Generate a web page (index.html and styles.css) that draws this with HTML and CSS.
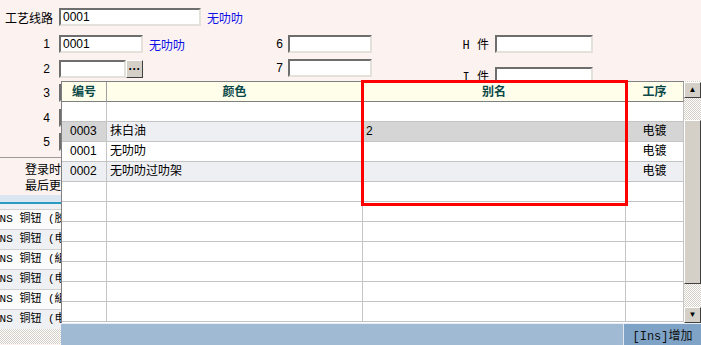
FILE: index.html
```html
<!DOCTYPE html>
<html lang="zh">
<head>
  <meta charset="UTF-8" />
  <title>工艺线路</title>
  <link rel="stylesheet" href="styles.css">
</head>
<body>
  <div class="page">
    <div class="top">
      <span class="top-label">工艺线路</span>
      <input class="field wide" value="0001">
      <span class="link">无叻叻</span>
    </div>

    <div class="fields">
      <div class="col col-a">
        <div class="row"><span class="lbl">1</span><input class="field mid" value="0001"><span class="link">无叻叻</span></div>
        <div class="row"><span class="lbl">2</span><input class="field short"><button class="dots">···</button></div>
        <div class="row"><span class="lbl">3</span><input class="field mid"></div>
        <div class="row"><span class="lbl">4</span><input class="field mid"></div>
        <div class="row"><span class="lbl">5</span><input class="field mid"></div>
      </div>
      <div class="col col-b">
        <div class="row"><span class="lbl">6</span><input class="field mid"></div>
        <div class="row"><span class="lbl">7</span><input class="field mid"></div>
      </div>
      <div class="col col-c">
        <div class="row"><span class="lbl">H 件</span><input class="field big"></div>
        <div class="row"><span class="lbl">I 件</span><input class="field big"></div>
      </div>
    </div>

    <div class="meta">
      <div class="meta-line">登录时</div>
      <div class="meta-line">最后更</div>
    </div>

    <div class="list-head"></div>
    <div class="list">
      <div class="item">ANS 铜钮 (胶</div>
      <div class="item alt">ANS 铜钮 (电</div>
      <div class="item">ANS 铜钮 (組</div>
      <div class="item alt">ANS 铜钮 (电</div>
      <div class="item">ANS 铜钮 (組</div>
      <div class="item alt">ANS 铜钮 (电</div>
    </div>
    <div class="dither"></div>

    <div class="popup">
      <div class="grid-area">
        <div class="grid">
          <div class="hd">编号</div><div class="hd">颜色</div><div class="hd">别名</div><div class="hd">工序</div>

          <div class="c"></div><div class="c"></div><div class="c"></div><div class="c"></div>

          <div class="c sel num">0003</div><div class="c focus">抹白油</div><div class="c sel">2</div><div class="c sel ctr">电镀</div>
          <div class="c num">0001</div><div class="c">无叻叻</div><div class="c"></div><div class="c ctr">电镀</div>
          <div class="c alt num">0002</div><div class="c alt">无叻叻过叻架</div><div class="c alt"></div><div class="c alt ctr">电镀</div>

          <div class="c"></div><div class="c"></div><div class="c"></div><div class="c"></div>
          <div class="c"></div><div class="c"></div><div class="c"></div><div class="c"></div>
          <div class="c"></div><div class="c"></div><div class="c"></div><div class="c"></div>
          <div class="c"></div><div class="c"></div><div class="c"></div><div class="c"></div>
          <div class="c"></div><div class="c"></div><div class="c"></div><div class="c"></div>
          <div class="c"></div><div class="c"></div><div class="c"></div><div class="c"></div>
          <div class="c"></div><div class="c"></div><div class="c"></div><div class="c"></div>
        </div>
        <div class="scroll">
          <div class="sbtn">&#9650;</div>
          <div class="track short-track"></div>
          <div class="thumb"></div>
          <div class="track"></div>
          <div class="sbtn">&#9660;</div>
        </div>
      </div>
      <div class="footer">
        <button class="ins">[Ins]增加</button>
      </div>
    </div>

    <div class="mark"></div>
  </div>
</body>
</html>
```

FILE: styles.css
```css
body {
  margin: 0;
  background: #fcf3f0;
  font-family: "Liberation Sans", "Noto Sans CJK SC", sans-serif;
  font-size: 12px;
  color: #000;
}

.page {
  position: relative;
  width: 701px;
  height: 345px;
  overflow: hidden;
}

.field {
  box-sizing: border-box;
  height: 18px;
  margin: 0;
  padding: 0 2px;
  background: #fff;
  border: 2px solid;
  border-color: #6e6e6e #e4e0da #e4e0da #6e6e6e;
  font: 12px "Liberation Sans", "Noto Sans CJK SC", sans-serif;
  color: #000;
  outline: none;
}

.wide { width: 142px; }
.mid { width: 84px; }
.short { width: 67px; }
.big { width: 98px; }

.link {
  color: #1010e8;
  margin-left: 6px;
}

.top {
  display: flex;
  align-items: center;
  height: 18px;
  padding: 8px 0 0 5px;
}

.top-label {
  width: 54px;
  font-size: 12px;
}

.fields {
  display: flex;
  margin-top: 9px;
}

.col {
  display: flex;
  flex-direction: column;
}

.col-a { width: 273px; gap: 6.5px; }
.col-b { width: 187px; gap: 6px; }
.col-c { gap: 14px; }

.row {
  display: flex;
  align-items: center;
  height: 18px;
}

.lbl {
  text-align: right;
  white-space: nowrap;
}

.col-a .lbl { width: 50px; margin-right: 9px; }
.col-b .lbl { width: 10px; margin-right: 5px; }
.col-c .lbl { width: 29px; margin-right: 6px; font-family: "Liberation Mono", "Noto Sans CJK SC", monospace; }

.dots {
  box-sizing: border-box;
  width: 17px;
  height: 18px;
  padding: 0;
  background: #d4d0c8;
  border: 1px solid;
  border-color: #fff #404040 #404040 #fff;
  font-weight: bold;
  font-size: 12px;
  line-height: 10px;
}

.meta {
  margin-top: 6px;
  border-top: 1px solid #9a9a9a;
  padding-top: 4px;
  line-height: 16px;
  height: 33px;
}

.meta-line {
  margin-left: 25px;
  white-space: nowrap;
}

.list-head {
  height: 7px;
  background: #dae7f3;
  border-bottom: 2px solid #2a9cc2;
}

.list {
  padding-top: 5px;
  background: #eef0f4;
}

.item {
  box-sizing: border-box;
  height: 20px;
  border-top: 1px solid #d0d0d0;
  background: #fbfbfb;
  text-indent: -7px;
  font: 11px "Liberation Mono", "Noto Sans CJK SC", monospace;
  line-height: 19px;
  white-space: nowrap;
}

.item.alt { background: #eef0f4; }

.dither {
  height: 15px;
  background: repeating-conic-gradient(#d4d0c8 0 25%, #fff 0 50%) 0 0 / 2px 2px;
}

/* drop-down grid over the form */
.popup {
  position: absolute;
  left: 61px;
  top: 81px;
  width: 640px;
  height: 264px;
  display: flex;
  flex-direction: column;
  background: #fff;
}

.grid-area {
  display: flex;
  height: 242px;
}

.grid {
  box-sizing: border-box;
  width: 623px;
  border-left: 1px solid #808080;
  border-top: 1px solid #808080;
  display: grid;
  grid-template-columns: 45px 256px 263px 58px;
  grid-auto-rows: 20px;
  align-content: start;
}

.hd {
  box-sizing: border-box;
  background: #fefeea;
  border-right: 1px solid #a0a0a0;
  border-bottom: 1px solid #808080;
  text-align: center;
  font-weight: bold;
  color: #0a4848;
  font-family: "Noto Sans CJK SC", sans-serif;
  line-height: 18px;
}

.c {
  box-sizing: border-box;
  border-right: 1px solid #c4c4c4;
  border-bottom: 1px solid #c4c4c4;
  padding-left: 3px;
  line-height: 19px;
  white-space: nowrap;
  overflow: hidden;
}

.c.num { padding-left: 8px; }
.c.ctr { text-align: center; padding-left: 0; }
.c.sel { background: #d5d5d5; }
.c.focus, .c.alt { background: #eeeff3; }

.scroll {
  width: 17px;
  display: flex;
  flex-direction: column;
  background: repeating-conic-gradient(#d4d0c8 0 25%, #fff 0 50%) 0 0 / 2px 2px;
}

.sbtn, .thumb {
  box-sizing: border-box;
  background: #d4d0c8;
  border: 1px solid;
  border-color: #fff #404040 #404040 #fff;
}

.sbtn {
  height: 16px;
  margin-top: 1px;
  font-size: 8px;
  line-height: 14px;
  text-align: center;
}

.short-track { height: 16px; }

.thumb { height: 164px; }

.track { flex: 1; }

.footer {
  flex: 1;
  display: flex;
  justify-content: flex-end;
  background: #9fbad2;
  border-top: 1px solid #e8eef4;
}

.ins {
  width: 78px;
  padding: 0;
  background: #7ea3c6;
  border: none;
  border-left: 1px solid #dfe8f0;
  font: 12px "Liberation Mono", "Noto Sans CJK SC", monospace;
  color: #101010;
}

/* highlight box */
.mark {
  position: absolute;
  left: 361px;
  top: 80px;
  width: 261px;
  height: 120px;
  border: 3px solid #ff0000;
}
```
